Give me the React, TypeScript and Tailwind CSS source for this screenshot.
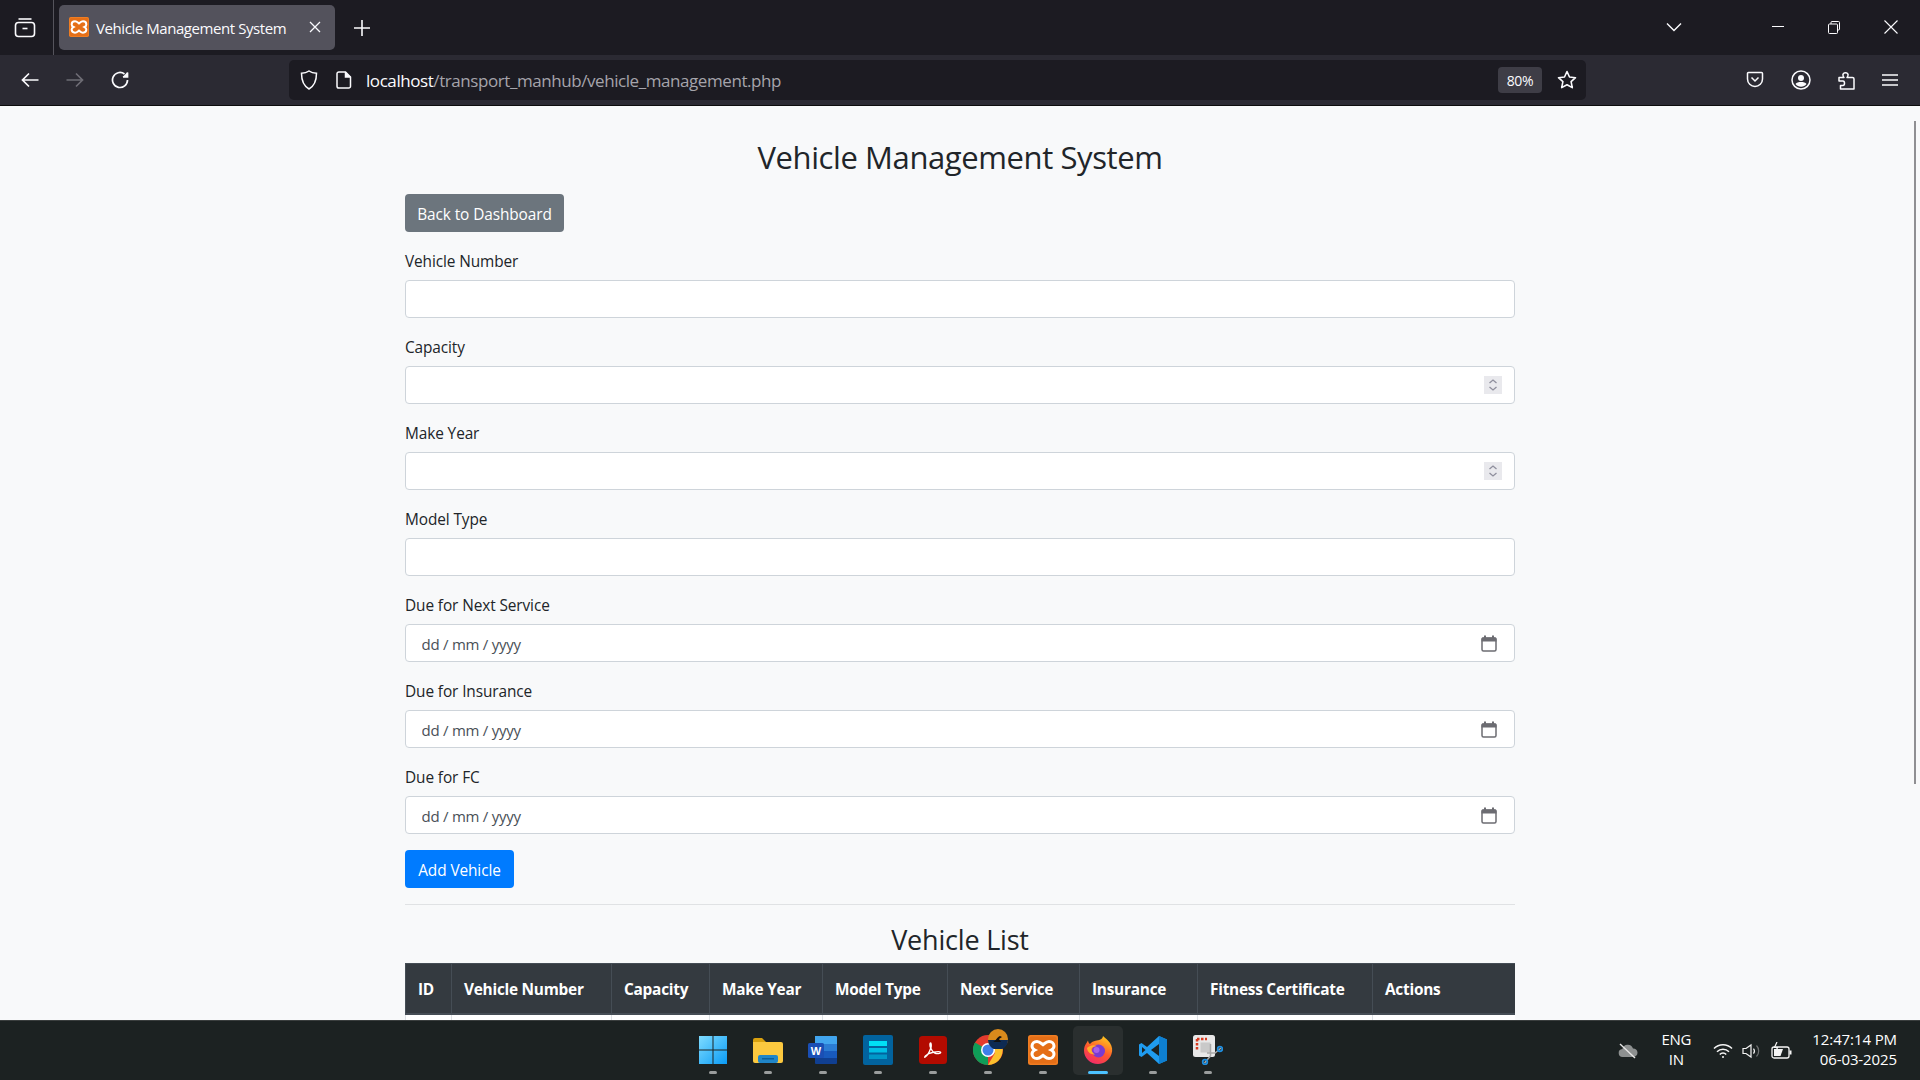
const sans = "font-['Open_Sans','Noto_Sans',sans-serif]";

const XamppMark = ({ size, bg = "#ef7d22" }: { size: number; bg?: string }) => (
    <svg width={size} height={size} viewBox="0 0 30 30">
        <rect width="30" height="30" rx="2.5" fill={bg} />
        <rect x="1.5" y="1.5" width="27" height="27" rx="2" fill="#e56f17" />
        <path d="M9 6.5c2.6 0 4 1.7 6 3.2 2-1.5 3.4-3.2 6-3.2 3 0 5 2.2 5 4.6 0 1.900-1 3-2.800 3.900 1.800.9 2.800 2 2.800 3.900 0 2.400-2 4.600-5 4.600-2.600 0-4-1.700-6-3.200-2 1.500-3.400 3.200-6 3.200-3 0-5-2.200-5-4.600 0-1.900 1-3 2.800-3.900C5 14.100 4 13 4 11.100c0-2.400 2-4.600 5-4.600z" fill="none" stroke="#fff" strokeWidth="3" />
    </svg>
);

const Field = ({ label, kind = "text" }: { label: string; kind?: "text" | "number" | "date" }) => (
    <div className="mb-4">
        <label className="block mb-2 h-6 leading-[27px] text-[15.4px] tracking-[-0.1px] text-[#212529]">{label}</label>
        <div className="flex items-center h-[38px] bg-white border border-[#ced4da] rounded-[4px] pl-[15.5px] pr-[12px]">
            <input
                type="text"
                readOnly
                placeholder={kind === "date" ? "dd / mm / yyyy" : ""}
                className="flex-1 min-w-0 h-full pt-[1px] bg-transparent outline-none text-[15px] text-[#495057] placeholder:text-[#495057] tracking-[-0.25px]"
            />
            {kind === "number" && (
                <span className="flex items-center justify-center w-[18px] h-[18px] bg-[#e9e9ed]">
                    <svg width="12" height="14" viewBox="0 0 12 14" fill="none" stroke="#8f8f9d" strokeWidth="1.300">
                        <path d="M2.500 5 6 2l3.500 3M2.500 9 6 12l3.500-3" />
                    </svg>
                </span>
            )}
            {kind === "date" && (
                <svg className="mr-[5px]" width="16" height="17" viewBox="0 0 16 17" fill="none">
                    <path d="M3 .5h2v2h6v-2h2v2h1.200c.7 0 1.300.6 1.300 1.300v2.700H.5V3.800c0-.7.6-1.300 1.300-1.300H3z" fill="#6c6c72" />
                    <rect x="1" y="3" width="14" height="13" rx="1.500" stroke="#6c6c72" strokeWidth="1.500" />
                </svg>
            )}
        </div>
    </div>
);

const columns = [
    { name: "ID", width: 46 },
    { name: "Vehicle Number", width: 160 },
    { name: "Capacity", width: 98 },
    { name: "Make Year", width: 113 },
    { name: "Model Type", width: 125 },
    { name: "Next Service", width: 132 },
    { name: "Insurance", width: 118 },
    { name: "Fitness Certificate", width: 175 },
    { name: "Actions", width: 142 },
];

const TabBar = () => (
    <div className="flex items-center h-[55px] bg-[#1c1b22] text-[#fbfbfe]">
        <div className="flex items-center justify-center w-[54px] h-full pr-[4px] border-r border-[#55545c]">
            <svg width="22" height="20" viewBox="0 0 22 20" fill="none" stroke="#fbfbfe" strokeWidth="1.600">
                <path d="M4.500 1h13" />
                <rect x="1.500" y="4.500" width="19" height="14" rx="3" />
                <path d="M8.500 10.500h5" />
            </svg>
        </div>
        <div className="flex items-center w-[276px] h-[45px] ml-[5px] mt-[-1px] pl-[10px] pr-[14px] bg-[#53525c] rounded-[5px]">
            <XamppMark size={20} />
            <span className={`ml-[7px] pt-[2px] flex-1 text-[15px] tracking-[-0.43px] whitespace-nowrap ${sans}`}>Vehicle Management System</span>
            <svg width="12" height="12" viewBox="0 0 12 12" stroke="#fbfbfe" strokeWidth="1.300"><path d="M1 1l10 10M11 1 1 11" /></svg>
        </div>
        <svg className="ml-[19px]" width="16" height="16" viewBox="0 0 16 16" stroke="#fbfbfe" strokeWidth="1.600"><path d="M8 0v16M0 8h16" /></svg>
        <div className="flex-1" />
        <svg className="mr-[90px] mt-[-1px]" width="16" height="10" viewBox="0 0 16 10" fill="none" stroke="#fbfbfe" strokeWidth="1.400"><path d="M1 1.500l7 7 7-7" /></svg>
        <div className="flex items-center h-full">
            <svg className="mr-[44px] mt-[-2px]" width="12" height="2" viewBox="0 0 12 2" fill="#fbfbfe"><rect width="12" height="1" /></svg>
            <svg className="mr-[44px] mt-[-1px]" width="12" height="13" viewBox="0 0 12 13" fill="none" stroke="#fbfbfe"><rect x=".5" y="3" width="9" height="9.500" rx="1" /><path d="M3 3V1.500a1 1 0 0 1 1-1h6.500a1 1 0 0 1 1 1V8a1 1 0 0 1-1 1H9.500" /></svg>
            <svg className="mr-[22px] mt-[-1px]" width="14" height="14" viewBox="0 0 14 14" stroke="#fbfbfe" strokeWidth="1.100"><path d="M.5.500l13 13M13.500.500l-13 13" /></svg>
        </div>
    </div>
);

const ToolBar = () => (
    <div className="flex items-center h-[51px] bg-[#2b2a33] border-b border-[#0c0c0d]">
        <div className="flex items-center w-[289px] shrink-0 pl-[21px]">
            <svg width="18" height="16" viewBox="0 0 18 16" fill="none" stroke="#fbfbfe" strokeWidth="1.700"><path d="M17.500 8H1.500M8 1.500 1.500 8 8 14.500" /></svg>
            <svg className="ml-[27px]" width="18" height="16" viewBox="0 0 18 16" fill="none" stroke="#6e6d75" strokeWidth="1.700"><path d="M.5 8h16M10 1.500 16.500 8 10 14.500" /></svg>
            <svg className="ml-[27px]" width="18" height="18" viewBox="0 0 18 18" fill="none" stroke="#fbfbfe" strokeWidth="1.700"><path d="M16.500 9A7.500 7.500 0 1 1 13.500 3" /><path d="M16.500 1v5h-5" fill="#fbfbfe" stroke="none" /><path d="M16.500 1.500v4.500H12" /></svg>
        </div>
        <div className="flex items-center w-[1297px] h-10 rounded-[5px] bg-[#1c1b22] text-[#fbfbfe]">
            <svg className="ml-[11px]" width="18" height="20" viewBox="0 0 18 20" fill="none" stroke="#fbfbfe" strokeWidth="1.500"><path d="M9 1c2 1.500 4.500 2.300 7.500 2.300 0 7.200-1.700 12.400-7.500 15.700C3.200 15.700 1.500 10.500 1.500 3.300 4.500 3.300 7 2.500 9 1z" /></svg>
            <svg className="ml-[18px]" width="16" height="18" viewBox="0 0 16 18" fill="none" stroke="#fbfbfe" strokeWidth="1.500"><path d="M2.800 1h6.700l5 5v9.200a1.800 1.800 0 0 1-1.800 1.800H2.800A1.800 1.800 0 0 1 1 15.200V2.800A1.800 1.800 0 0 1 2.800 1z" /><path d="M9.500 1v5h5" fill="#fbfbfe" /></svg>
            <span className={`ml-[14px] pt-[2px] text-[17px] tracking-[-0.43px] whitespace-nowrap ${sans}`}>
                localhost<span className="text-[#a5a4ab]">/transport_manhub/vehicle_management.php</span>
            </span>
            <div className="flex-1" />
            <span className={`flex items-center justify-center w-11 h-[26px] pt-[1px] rounded-[4px] bg-[#3e3d46] text-[14px] tracking-[-0.3px] ${sans}`}>80%</span>
            <svg className="ml-[15px] mr-[9px]" width="20" height="20" viewBox="0 0 20 20" fill="none" stroke="#fbfbfe" strokeWidth="1.600" strokeLinejoin="round"><path d="m10 1.500 2.500 5.500 6 .7-4.400 4 1.200 5.900L10 14.700l-5.300 2.900 1.200-5.900-4.400-4 6-.7z" /></svg>
        </div>
        <div className="flex-1" />
        <svg className="mr-[27px]" width="18" height="18" viewBox="0 0 18 18" fill="none" stroke="#fbfbfe" strokeWidth="1.500"><path d="M2.500 1.500h13a1 1 0 0 1 1 1V8a7.500 7.500 0 0 1-15 0V2.500a1 1 0 0 1 1-1z" /><path d="m5.500 6.500 3.500 3.500 3.500-3.500" /></svg>
        <svg className="mr-[27px]" width="20" height="20" viewBox="0 0 20 20" fill="none"><circle cx="10" cy="10" r="9" stroke="#fbfbfe" strokeWidth="1.500" /><circle cx="10" cy="8" r="3" fill="#fbfbfe" /><path d="M4.500 14c1-1.500 3-2 5.500-2s4.500.5 5.500 2c-1.300 1.700-3.300 2.700-5.500 2.700S5.800 15.700 4.500 14z" fill="#fbfbfe" /></svg>
        <svg className="mr-[26px]" width="18" height="20" viewBox="0 0 18 20" fill="none" stroke="#fbfbfe" strokeWidth="1.500" strokeLinejoin="round"><path d="M1 11V7.500h5c-1-1-1.200-2-1-3 .3-2.500 4.700-2.500 5 0 .2 1-.1 2-1 3h5.500a1.500 1.500 0 0 1 1.500 1.500V19H2.500v-3.500H5c1 0 1.500-1 1.500-2.200S6 11 5 11z" /></svg>
        <svg className="mr-[22px]" width="16" height="14" viewBox="0 0 16 14" stroke="#fbfbfe" strokeWidth="1.500"><path d="M0 2h16M0 7h16M0 12h16" /></svg>
    </div>
);

const TaskIcon = ({ active, children }: { active?: boolean; children: React.ReactNode }) => (
    <div className={`relative flex items-center justify-center w-[50px] h-[49px] mx-[2.5px] pb-[2px] rounded-[5px] ${active ? "bg-[#2a2f2f]" : ""}`}>
        {children}
        <span className={`absolute bottom-[1px] h-[3px] rounded-full ${active ? "w-5 bg-[#4cc2ff]" : "w-2 bg-[#9a9d9d]"}`} />
    </div>
);

const TaskBar = () => (
    <div className={`flex items-center h-[60px] bg-[#1c2222] border-t border-[#3a3e3e] text-white ${sans}`}>
        <div className="w-[685.5px] shrink-0" />
        <div className="flex items-center">
            <TaskIcon>
                <svg width="30" height="30" viewBox="0 0 30 30">
                    <defs><linearGradient id="win" x1="0" y1="0" x2="1" y2="1"><stop offset="0" stopColor="#7fdcff" /><stop offset="1" stopColor="#0a9bf5" /></linearGradient></defs>
                    <path d="M1 1h13.500v13.500H1zM15.500 1H29v13.500H15.500zM1 15.500h13.500V29H1zM15.500 15.500H29V29H15.500z" fill="url(#win)" />
                </svg>
            </TaskIcon>
            <TaskIcon>
                <svg width="30" height="30" viewBox="0 0 30 30">
                    <path d="M0 5a2 2 0 0 1 2-2h7l4 4v5H0z" fill="#d9a10f" />
                    <path d="M0 7h28a2 2 0 0 1 2 2v17a2 2 0 0 1-2 2H2a2 2 0 0 1-2-2z" fill="#fcc93f" />
                    <rect x="5" y="20" width="20" height="8" rx="2" fill="#2086c9" />
                    <rect x="9" y="23" width="12" height="1.500" fill="#0b5f9c" />
                </svg>
            </TaskIcon>
            <TaskIcon>
                <svg width="30" height="30" viewBox="0 0 30 30">
                    <path d="M7 1h21a1 1 0 0 1 1 1v7H7z" fill="#41a5ee" />
                    <path d="M7 9h22v7H7z" fill="#2b7cd3" />
                    <path d="M7 16h22v7H7z" fill="#185abd" />
                    <path d="M7 23h22v5a1 1 0 0 1-1 1H8a1 1 0 0 1-1-1z" fill="#103f91" />
                    <rect x="0" y="8" width="16" height="15" rx="1.500" fill="#1a4fb5" />
                    <text x="8" y="20" textAnchor="middle" fontSize="11" fontWeight="700" fill="#fff" fontFamily="Liberation Sans, sans-serif">W</text>
                </svg>
            </TaskIcon>
            <TaskIcon>
                <svg width="30" height="30" viewBox="0 0 30 30">
                    <rect width="30" height="30" rx="2" fill="#02639e" />
                    <rect x="6" y="6" width="18" height="5" fill="#00e0f5" />
                    <rect x="6" y="13" width="18" height="4.500" fill="#00bfe6" />
                    <rect x="6" y="19.500" width="18" height="4.500" fill="#0098c9" />
                </svg>
            </TaskIcon>
            <TaskIcon>
                <svg width="28" height="28" viewBox="0 0 28 28">
                    <rect width="28" height="28" rx="3.500" fill="#b30b00" />
                    <path d="M6 21c2-1 4.500-5 6-9.500.4-1.500.3-4.500-.4-4.500-.9 0-.8 3 0 4.800 1.300 3 3.700 5.300 5.400 5.700 2.500.5 5-.3 4.600-1.200-.4-.9-3.600-.8-7.400 0-3 .6-6 1.900-7.500 3.500-1 1.100-1.300 1.700-.7 1.200z" fill="none" stroke="#fff" strokeWidth="1.400" />
                </svg>
            </TaskIcon>
            <TaskIcon>
                <div className="relative w-[30px] h-[30px]">
                    <svg width="30" height="30" viewBox="0 0 30 30">
                        <circle cx="15" cy="15" r="15" fill="#e33b2e" />
                        <path d="M15 15 2 7.500A15 15 0 0 0 15 30z" fill="#0f9d58" />
                        <path d="M15 8h13a15 15 0 0 1-13 22l7-12z" fill="#fbc02d" />
                        <circle cx="15" cy="15" r="7" fill="#fff" />
                        <circle cx="15" cy="15" r="5.500" fill="#3f7fe8" />
                    </svg>
                    <svg className="absolute top-[-6px] left-[15px]" width="20" height="20" viewBox="0 0 20 20">
                        <circle cx="10" cy="10" r="10" fill="#d98a1c" />
                        <path d="M0 11h20a10 10 0 0 1-20 0z" fill="#0d2a52" />
                        <path d="M5 13c3-1 4-5 7-6l2 1-3 2 2 3z" fill="#111" />
                    </svg>
                </div>
            </TaskIcon>
            <TaskIcon><XamppMark size={30} /></TaskIcon>
            <TaskIcon active>
                <svg width="30" height="30" viewBox="0 0 30 30">
                    <defs><linearGradient id="fx" x1="0.700" y1="0" x2="0.200" y2="1"><stop offset="0" stopColor="#ffc51d" /><stop offset="0.500" stopColor="#ff5a2c" /><stop offset="1" stopColor="#f0266f" /></linearGradient></defs>
                    <path d="M20 1c4 3.500 5 4 7 7 2.300 3.500 2.800 7.500 1.500 11-2 6-7.500 10-13.500 10C7 29 1 23 1 15.500c0-2.700.8-5.500 2.500-7.500L5 5.500c.3 2 1 2.800 2 3.500 1.500-2 3.500-2.800 5.500-3.200C16 5 19.500 5 20 1z" fill="url(#fx)" />
                    <circle cx="15.500" cy="16" r="6.500" fill="#7a3bd1" />
                    <circle cx="13.500" cy="15" r="3" fill="#a65fe8" />
                    <path d="M4 13c3-3 7-3.500 10-2 -3 .5-5 1-5.500 3-.4 1.700 1 4 3.500 5.500-4 0-7.500-2-8-6.500z" fill="#ffb02a" />
                </svg>
            </TaskIcon>
            <TaskIcon>
                <svg width="30" height="30" viewBox="0 0 30 30">
                    <path d="M21 1 9 12 3.500 8 1 9.500v11L3.500 22 9 18l12 11 8-3.500V4.500z" fill="#1f9cf0" />
                    <path d="M21 1 29 4.500v21L21 29z" fill="#0e7fd0" />
                    <path d="M21 9v12l-8-6z" fill="#1c2222" />
                    <path d="M4 12l3.500 3L4 18z" fill="#1c2222" />
                </svg>
            </TaskIcon>
            <TaskIcon>
                <svg width="30" height="30" viewBox="0 0 30 30">
                    <rect x="0" y="0" width="22" height="22" rx="2.500" fill="#e8e8e8" />
                    <path d="M4 4h10" stroke="#d8391f" strokeWidth="2.500" strokeDasharray="2.500 1.500" />
                    <path d="M4 4v11" stroke="#d8391f" strokeWidth="2.500" strokeDasharray="2.500 1.500" />
                    <path d="M7.500 7.500h10v10h-10z" fill="#c9c9c9" />
                    <path d="M17.500 9v12l-6 7M14 18h8l6-5" fill="none" stroke="#a8a8a8" strokeWidth="1.500" />
                    <circle cx="12" cy="27" r="2.300" fill="none" stroke="#1f8fe0" strokeWidth="1.800" />
                    <circle cx="27" cy="14" r="2.300" fill="none" stroke="#1f8fe0" strokeWidth="1.800" />
                </svg>
            </TaskIcon>
        </div>
        <div className="flex-1" />
        <div className="flex items-center text-[15px]">
            <svg width="20" height="16" viewBox="0 0 20 16" className="mr-[18px]">
                <path d="M5 14a4 4 0 0 1-.6-8A5.500 5.500 0 0 1 15 5.500a4.200 4.200 0 0 1 .5 8.500z" fill="#8d9090" />
                <path d="M2 1l15 14" stroke="#e6e6e6" strokeWidth="1.400" />
            </svg>
            <div className="text-center leading-[20px] tracking-[-0.2px] w-[40px] pb-[3px]">ENG<br />IN</div>
            <svg className="ml-[17px]" width="20" height="16" viewBox="0 0 20 16" fill="none" stroke="#f5f5f5" strokeWidth="1.500">
                <path d="M1 5.500a12.500 12.500 0 0 1 18 0M4 8.700a8.300 8.300 0 0 1 12 0M6.800 11.500a4.300 4.300 0 0 1 6.400 0" />
                <circle cx="10" cy="14" r="1" fill="#f5f5f5" stroke="none" />
            </svg>
            <svg className="ml-[9px]" width="20" height="18" viewBox="0 0 20 18" fill="none" stroke="#f5f5f5" strokeWidth="1.200">
                <path d="M1 6.500h3L9 3v12l-5-3.500H1z" />
                <path d="M11.500 6.500a4 4 0 0 1 0 5" />
                <path d="M14.500 3.500a8 8 0 0 1 0 11" stroke="#6f7272" />
            </svg>
            <svg className="ml-[9px]" width="21" height="18" viewBox="0 0 21 18" fill="none">
                <rect x="1" y="5" width="17" height="11" rx="2" stroke="#f5f5f5" strokeWidth="1.300" />
                <rect x="18.500" y="8.500" width="2" height="4" fill="#f5f5f5" />
                <path d="M3 14V7h9l-2.500 7z" fill="#f5f5f5" />
                <path d="M6 0 3.500 5.500h3L5 9" stroke="#f5f5f5" strokeWidth="1.200" />
            </svg>
            <div className="ml-[20px] mr-[23px] pb-[3px] text-right leading-[20px] tracking-[-0.1px]">12:47:14 PM<br />06-03-2025</div>
        </div>
    </div>
);

const App = () => {
    return (
        <div className={`flex flex-col h-screen overflow-hidden ${sans}`}>
            <TabBar />
            <ToolBar />
            <main className="relative flex-1 min-h-0 overflow-hidden bg-[#f8f9fa] text-[#212529]">
                <div className="w-[1110px] mx-auto pt-[32px]">
                    <h2 className="text-center text-[31px] leading-[38px] tracking-[-0.4px] mb-[18px]">Vehicle Management System</h2>
                    <button className="block h-[38px] w-[159px] mb-4 pt-[3px] rounded-[4px] bg-[#6c757d] text-white text-[15.400px] tracking-[-0.1px]">Back to Dashboard</button>
                    <Field label="Vehicle Number" />
                    <Field label="Capacity" kind="number" />
                    <Field label="Make Year" kind="number" />
                    <Field label="Model Type" />
                    <Field label="Due for Next Service" kind="date" />
                    <Field label="Due for Insurance" kind="date" />
                    <Field label="Due for FC" kind="date" />
                    <button className="block h-[38px] w-[109px] pt-[3px] rounded-[4px] bg-[#007bff] text-white text-[15.400px] tracking-[-0.1px]">Add Vehicle</button>
                    <hr className="my-4 border-[#e0e2e4]" />
                    <h3 className="text-center text-[27px] leading-[34px] pt-[2px] h-[34px] tracking-[-0.2px] mb-2">Vehicle List</h3>
                    <table className="w-[1109px] table-fixed border-collapse bg-white">
                        <thead>
                            <tr>
                                {columns.map((col) => (
                                    <th
                                        key={col.name}
                                        style={{ width: col.width }}
                                        className="h-[50px] px-3 pt-[3px] text-left align-middle bg-[#343a40] border border-[#454d55] border-b-2 last:border-r-0 text-white text-[15.400px] font-bold tracking-[-0.25px] whitespace-nowrap"
                                    >
                                        {col.name}
                                    </th>
                                ))}
                            </tr>
                        </thead>
                        <tbody>
                            <tr>
                                {columns.map((col) => (
                                    <td key={col.name} className="h-12 border border-[#dee2e6] last:border-r-0"></td>
                                ))}
                            </tr>
                        </tbody>
                    </table>
                </div>
                <div className="absolute right-[4px] top-[15px] w-[2px] h-[663px] bg-[#8f8f92]" />
            </main>
            <TaskBar />
        </div>
    );
};

export default App;
